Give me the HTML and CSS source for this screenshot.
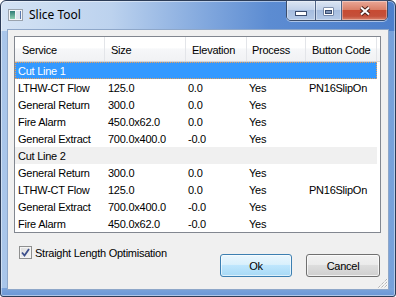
FILE: index.html
```html
<!DOCTYPE html>
<html lang="en">
<head>
    <meta charset="UTF-8">
    <meta name="viewport" content="width=device-width, initial-scale=1.0">
    <title>Slice Tool</title>
    <link rel="stylesheet" href="styles.css">
</head>
<body>
    <div class="window">
        <div class="titlebar">
            <svg class="app-icon" width="15" height="12" viewBox="0 0 15 12">
                <defs>
                    <linearGradient id="panel" x1="0" y1="0" x2="0" y2="1">
                        <stop offset="0" stop-color="#2f7d77"/>
                        <stop offset="1" stop-color="#8fcfb0"/>
                    </linearGradient>
                </defs>
                <rect x="0.5" y="0.5" width="14" height="11" fill="#f4f6f8" stroke="#9aa3ad"/>
                <rect x="2" y="2" width="5" height="8" fill="url(#panel)"/>
                <rect x="8" y="2" width="4" height="8" fill="#dfe6ee"/>
                <rect x="12" y="2" width="1" height="8" fill="#5a7ab0"/>
            </svg>
            <span class="title">Slice Tool</span>
            <div class="caption">
                <div class="cap-btn cap-min">
                    <svg width="12" height="5" viewBox="0 0 12 5"><rect x="0.5" y="0.5" width="11" height="4" fill="#fff" stroke="#3a4c6e"/></svg>
                </div>
                <div class="cap-btn cap-max">
                    <svg width="11" height="9" viewBox="0 0 11 9">
                        <rect x="0.5" y="0.5" width="10" height="8" fill="#3a4c6e"/>
                        <rect x="1.5" y="1.5" width="8" height="6" fill="none" stroke="#fff"/>
                        <rect x="2" y="2" width="7" height="1" fill="#fff"/>
                        <rect x="3" y="4" width="5" height="2" fill="#7f95b8"/>
                    </svg>
                </div>
                <div class="cap-btn cap-close">
                    <svg width="12" height="10" viewBox="0 0 12 10">
                        <path d="M2 1.5 L10 8.5 M10 1.5 L2 8.5" stroke="#4b221b" stroke-width="4"/>
                        <path d="M2 1.5 L10 8.5 M10 1.5 L2 8.5" stroke="#fff" stroke-width="2"/>
                    </svg>
                </div>
            </div>
        </div>

        <div class="client">
            <div class="listview">
                <div class="list-header">
                    <div class="head-cell">Service</div>
                    <div class="head-cell">Size</div>
                    <div class="head-cell">Elevation</div>
                    <div class="head-cell">Process</div>
                    <div class="head-cell">Button Code</div>
                </div>
                <div class="row group selected"><div class="cell span">Cut Line 1</div></div>
                <div class="row"><div class="cell">LTHW-CT Flow</div><div class="cell">125.0</div><div class="cell">0.0</div><div class="cell">Yes</div><div class="cell">PN16SlipOn</div></div>
                <div class="row"><div class="cell">General Return</div><div class="cell">300.0</div><div class="cell">0.0</div><div class="cell">Yes</div><div class="cell"></div></div>
                <div class="row"><div class="cell">Fire Alarm</div><div class="cell">450.0x62.0</div><div class="cell">0.0</div><div class="cell">Yes</div><div class="cell"></div></div>
                <div class="row"><div class="cell">General Extract</div><div class="cell">700.0x400.0</div><div class="cell">-0.0</div><div class="cell">Yes</div><div class="cell"></div></div>
                <div class="row group"><div class="cell span">Cut Line 2</div></div>
                <div class="row"><div class="cell">General Return</div><div class="cell">300.0</div><div class="cell">0.0</div><div class="cell">Yes</div><div class="cell"></div></div>
                <div class="row"><div class="cell">LTHW-CT Flow</div><div class="cell">125.0</div><div class="cell">0.0</div><div class="cell">Yes</div><div class="cell">PN16SlipOn</div></div>
                <div class="row"><div class="cell">General Extract</div><div class="cell">700.0x400.0</div><div class="cell">-0.0</div><div class="cell">Yes</div><div class="cell"></div></div>
                <div class="row"><div class="cell">Fire Alarm</div><div class="cell">450.0x62.0</div><div class="cell">-0.0</div><div class="cell">Yes</div><div class="cell"></div></div>
            </div>

            <div class="footer">
                <label class="check">
                    <span class="check-box">
                        <svg width="9" height="9" viewBox="0 0 9 9"><path d="M1 4.5 L3.5 7.5 L8 1" fill="none" stroke="#3c4f8c" stroke-width="1.8"/></svg>
                    </span>
                    Straight Length Optimisation
                </label>
                <div class="buttons">
                    <button class="btn btn-default">Ok</button>
                    <button class="btn btn-cancel">Cancel</button>
                </div>
            </div>

            <svg class="grip" width="12" height="12" viewBox="0 0 12 12">
                <path d="M11 2 L2 11 M11 5 L5 11 M11 8 L8 11" stroke="#fff" stroke-width="1" stroke-dasharray="1 1" transform="translate(1 0)"/>
                <path d="M11 2 L2 11 M11 5 L5 11 M11 8 L8 11" stroke="#9a9a9a" stroke-width="1" stroke-dasharray="1 1"/>
            </svg>
        </div>
    </div>
</body>
</html>
```

FILE: styles.css
```css
* {
    box-sizing: border-box;
}
body {
    margin: 0;
    font-family: "Liberation Sans", Arial, sans-serif;
    font-size: 11px;
    letter-spacing: -0.25px;
    color: #000;
}
.window {
    width: 396px;
    height: 297px;
    display: flex;
    flex-direction: column;
    padding: 0 7px 7px 7px;
    border: 1px solid #2c3c57;
    border-radius: 6px 6px 3px 3px;
    background:
        linear-gradient(to right, #d4e3f4 0%, #bcd2ee 28%, #86abdf 50%, #5c8cd2 68%, #4d7fcb 100%) top / 100% 30px no-repeat,
        linear-gradient(#7ba4dc, #6b97d5) bottom / 100% 8px no-repeat,
        linear-gradient(to right, #a9c6ea 0%, #8fb3e3 50%, #77a1da 100%);
    box-shadow: inset 0 0 0 1px rgba(255, 255, 255, 0.45);
}
.titlebar {
    height: 29px;
    display: flex;
    align-items: flex-start;
}
.app-icon {
    margin-top: 8px;
}
.title {
    margin: 5px 0 0 6px;
    font-family: "Noto Sans", "Liberation Sans", sans-serif;
    font-size: 12px;
    letter-spacing: 0;
    line-height: 17px;
    color: #000;
}
.caption {
    display: flex;
    margin-left: auto;
    margin-top: -1px;
    height: 21px;
    border: 1px solid #3b4d6b;
    border-radius: 0 0 5px 5px;
    overflow: hidden;
    box-shadow: 0 1px 0 rgba(255, 255, 255, 0.5);
}
.cap-btn {
    display: flex;
    justify-content: center;
    background: linear-gradient(#dbe5f3, #c2d2ea 45%, #a6bddf 50%, #b4c9e7 100%);
    border-right: 1px solid #4f6386;
    box-shadow: inset 0 0 0 1px rgba(255, 255, 255, 0.35);
}
.cap-min {
    width: 29px;
    padding-top: 10px;
}
.cap-max {
    width: 26px;
    padding-top: 6px;
}
.cap-close {
    width: 45px;
    padding-top: 5px;
    border-right: none;
    background: linear-gradient(#e9a797 0%, #d98069 45%, #c74b33 50%, #c4503a 80%, #d9856e 100%);
}
.client {
    position: relative;
    flex: 1;
    background: #f0f0f0;
    box-shadow: 0 0 0 1px #8ea7c9;
}
.listview {
    margin: 6px 7px 0 6px;
    height: 197px;
    border: 1px solid #828790;
    background: #fff;
}
.list-header {
    display: grid;
    grid-template-columns: 90px 81px 61px 59px 71px;
    height: 25px;
    border-bottom: 1px solid #d5d5d5;
    background: linear-gradient(#ffffff 0%, #ffffff 45%, #f6f7f9 50%, #f1f2f4 100%);
}
.head-cell {
    padding: 2px 0 0 7px;
    line-height: 22px;
    white-space: nowrap;
    box-shadow: inset -1px 0 #e3e5e9;
}
.head-cell:nth-child(2),
.head-cell:nth-child(3),
.head-cell:nth-child(5) {
    padding-left: 6px;
}
.head-cell:nth-child(4) {
    padding-left: 5px;
}
.row {
    display: grid;
    grid-template-columns: 90px 81px 61px 59px 71px;
    width: 362px;
    height: 17px;
}
.cell {
    padding: 1px 0 0 3px;
    line-height: 16px;
    white-space: nowrap;
}
.cell:nth-child(3),
.cell:nth-child(4) {
    padding-left: 2px;
}
.cell.span {
    grid-column: 1 / -1;
}
.group {
    background: #f0f0f0;
}
.selected {
    background: #3399ff;
    color: #fff;
    outline: 1px dotted #e9a05a;
    outline-offset: -1px;
}
.footer {
    display: flex;
    justify-content: space-between;
    align-items: flex-start;
    padding: 13px 8px 0 11px;
}
.check {
    display: flex;
    align-items: center;
    gap: 3px;
    height: 13px;
}
.check-box {
    display: flex;
    align-items: center;
    justify-content: center;
    width: 13px;
    height: 13px;
    border: 1px solid #8e8f8f;
    background: linear-gradient(135deg, #dcdcdc, #f7f7f7);
    box-shadow: inset 0 0 0 1px #f4f4f4;
}
.buttons {
    display: flex;
    gap: 14px;
    margin-top: 8px;
}
.btn {
    height: 23px;
    padding: 0;
    font-family: inherit;
    font-size: 11px;
    letter-spacing: -0.25px;
    color: #000;
    border-radius: 3px;
}
.btn-default {
    width: 72px;
    border: 1px solid #3c7fb1;
    background: linear-gradient(#eaf6fd 0%, #d9f0fc 45%, #bee6fd 50%, #a7d9f5 100%);
    box-shadow: inset 0 0 0 1px rgba(255, 255, 255, 0.6);
}
.btn-cancel {
    width: 74px;
    border: 1px solid #707070;
    background: linear-gradient(#f2f2f2 0%, #ebebeb 45%, #dddddd 50%, #cfcfcf 100%);
    box-shadow: inset 0 0 0 1px rgba(255, 255, 255, 0.7);
}
.grip {
    position: absolute;
    right: 0;
    bottom: 0;
}
```
